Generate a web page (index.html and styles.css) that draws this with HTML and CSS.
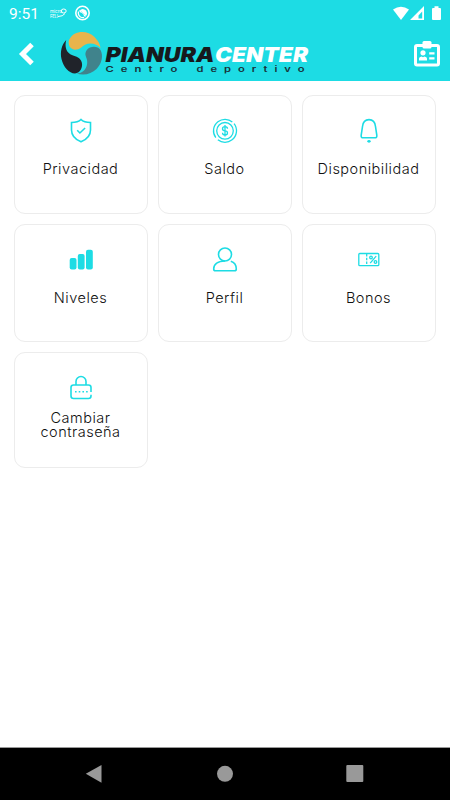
FILE: index.html
```html
<!DOCTYPE html>
<html lang="es">
<head>
  <meta charset="UTF-8">
  <meta name="viewport" content="width=device-width, initial-scale=1.0">
  <title>Pianura Center</title>
  <link rel="stylesheet" href="styles.css">
</head>
<body>
  <header class="header">
    <div class="status-bar">
      <span class="time">9:51</span>
      <svg class="status-left" width="42" height="18" viewBox="0 0 42 18">
        <text x="0" y="7.500" font-size="4.6" textLength="12">micro</text>
        <text x="0" y="12.500" font-size="4.6" textLength="8">FELI</text>
        <ellipse cx="13.7" cy="6" rx="2.5" ry="2" fill="none" stroke="#fff"/>
        <path d="M8 11.500q5 0 7-3" fill="none" stroke="#fff"/>
        <circle cx="32.500" cy="8" r="6.700" fill="none" stroke="#fff" stroke-width="1.6"/>
        <path d="M29.500 5.500q3-3 6.500 0 2 3 0 5.500l-5-5z" fill="#fff"/>
        <path d="M28.500 6.500q-.8 3.500 2 5.500 2 1 3.500.3M29.500 5.500l6 6" fill="none" stroke="#fff" stroke-width="1.3"/>
        <path d="M31 8l2.500 2.500" stroke="#1ddce4" stroke-width="1.3"/>
      </svg>
      <svg class="status-right" width="50" height="18" viewBox="0 0 50 18" fill="#fff">
        <path d="M1 4.500q8-5.500 16 0L9 15z"/>
        <path fill-rule="evenodd" d="M18 15L32 1v14zM26.500 13.500h3.700V6.500l-3.700 4z"/>
        <path d="M42.500 1.300h4V3H48q1 0 1 1v10q0 1-1 1h-7q-1 0-1-1V4q0-1 1-1h1.500z"/>
      </svg>
    </div>
    <div class="app-bar">
      <svg class="back" width="18" height="24" viewBox="0 0 18 24">
        <path d="M15 2.500L5.500 12l9.500 9.500" fill="none" stroke="#fff" stroke-width="5"/>
      </svg>
      <svg class="logo" width="252" height="48" viewBox="0 0 252 48">
        <path d="M9 10C12 4 17 2 22 2C27 2 31 3.500 34.500 7C38 10.500 40 14 40.500 18C37 13.500 30 12.300 25 14.700C21.500 16.500 20.500 19 17 19.500C11 20.500 7.500 15.500 9 10Z" fill="#e9b44c"/>
        <path d="M6.200 10C1.500 15 0 22 1.500 29C3.500 37.500 9 43.300 15 43.500C20.500 43 23 37 21.800 32.500C20.500 27.500 16 26.500 12.500 25.300C6 23 4.500 16.500 6.200 10Z" fill="#20232a"/>
        <path d="M16.500 43.500C24 46 31.500 44 36.500 39C42 33.500 43.500 25.500 40.500 20C37.500 15.500 30 16 26.800 20C24.500 23.500 25.500 25.500 26.800 29C28 33.500 26.500 38 24 40.500C22 42.500 19.500 43.300 16.500 43.500Z" fill="#40838c"/>
        <text class="logo-name" x="45.500" y="32" textLength="109" lengthAdjust="spacingAndGlyphs" fill="#17191d">PIANURA</text>
        <text class="logo-name" x="155" y="32" textLength="93" lengthAdjust="spacingAndGlyphs" fill="#fff">CENTER</text>
        <text class="logo-sub" x="45.500" y="41.500" textLength="79" lengthAdjust="spacingAndGlyphs">Centro</text>
        <text class="logo-sub" x="136.500" y="41.500" textLength="115" lengthAdjust="spacingAndGlyphs">deportivo</text>
      </svg>
      <svg class="card-id" width="27" height="26" viewBox="0 0 27 26">
        <rect x="2.500" y="4.500" width="23" height="19.500" rx="1.500" fill="none" stroke="#fff" stroke-width="3"/>
        <rect x="9.500" y="0" width="9" height="7.500" rx="1.500" fill="#fff"/>
        <circle cx="10" cy="11.800" r="2.600" fill="#fff"/>
        <path d="M6 19.500v-2q0-1.500 2.500-2l1.500.8 1.500-.8q2.500.5 2.500 2v2z" fill="#fff"/>
        <path d="M16.200 12.300H21.500M16.200 17.300H21.500" stroke="#fff" stroke-width="2.200"/>
      </svg>
    </div>
  </header>

  <main class="grid">
    <div class="card">
      <svg class="icon" viewBox="0 0 26 26">
        <path d="M13 1.500Q16 4.500 22.500 4.500V12Q22.500 20 13 23.800Q3.500 20 3.500 12V4.500Q10 4.500 13 1.500Z"/>
        <path d="M9.200 12.300l2.700 2.700 5.200-5"/>
      </svg>
      <span class="label">Privacidad</span>
    </div>
    <div class="card">
      <svg class="icon thin" viewBox="0 0 26 26">
        <circle cx="13" cy="12.800" r="8.300"/>
        <circle cx="13" cy="12.800" r="11.500" stroke-dasharray="33.130 3" transform="rotate(-38 13 12.800)"/>
        <path d="M15.500 10.800q0-2.200-2.500-2.200t-2.500 2.100 2.500 2.100 2.500 2.100-2.500 2.100-2.500-2.200M13 7v11.600"/>
      </svg>
      <span class="label">Saldo</span>
    </div>
    <div class="card">
      <svg class="icon" viewBox="0 0 26 26">
        <path d="M6.500 8.500Q7.200 1.600 13 1.600T19.500 8.500L20.800 17.200Q21.200 19.800 18.800 19.800H7.200Q4.800 19.800 5.200 17.200Z"/>
        <ellipse class="solid" cx="13" cy="23.300" rx="1.700" ry="1.400"/>
      </svg>
      <span class="label">Disponibilidad</span>
    </div>
    <div class="card">
      <svg class="icon solid" viewBox="0 0 26 26">
        <rect x="1.700" y="11" width="6.800" height="11.500" rx="2"/>
        <rect x="9.800" y="7" width="6.800" height="15.500" rx="2"/>
        <rect x="18" y="2.800" width="6.800" height="19.700" rx="2"/>
      </svg>
      <span class="label">Niveles</span>
    </div>
    <div class="card">
      <svg class="icon" viewBox="0 0 26 26">
        <circle cx="13" cy="7.500" r="6.500"/>
        <path d="M13 14Q1.700 14.500 1.700 22Q1.700 23.800 3.500 23.800H22.500Q24.300 23.800 24.300 22Q24.300 16 18.800 14.300"/>
      </svg>
      <span class="label">Perfil</span>
    </div>
    <div class="card">
      <svg class="icon thin" viewBox="0 0 26 26">
        <rect x="2.800" y="6.500" width="20" height="12.200" rx="1"/>
        <path d="M10.700 7v12" stroke-dasharray="2.500 1.200"/>
        <circle cx="15" cy="10.500" r="1.300"/>
        <circle cx="19.500" cy="15" r="1.300"/>
        <path d="M20.200 9.200l-6 7"/>
      </svg>
      <span class="label">Bonos</span>
    </div>
    <div class="card card-tall">
      <svg class="icon" viewBox="0 0 26 26">
        <path d="M8 10V6.500a5 5 0 0 1 10 0V10"/>
        <path d="M23 17V12.500Q23 10 20.500 10H5.500Q3 10 3 12.500V21Q3 23.500 5.500 23.500H20.500Q23 23.500 23 21V19.800"/>
        <path d="M7 16.800h13" stroke-dasharray="1.600 2.100"/>
      </svg>
      <span class="label">Cambiar contraseña</span>
    </div>
  </main>

  <footer class="nav-bar">
    <svg width="18" height="18" viewBox="0 0 18 18"><path d="M.8 8.800L16.500 0v17.800z"/></svg>
    <svg width="18" height="18" viewBox="0 0 18 18"><circle cx="9" cy="8.800" r="8"/></svg>
    <svg width="18" height="18" viewBox="0 0 18 18"><rect x=".3" y="0" width="17" height="17" rx="1"/></svg>
  </footer>
</body>
</html>
```

FILE: styles.css
```css
* {
  box-sizing: border-box;
}

body {
  margin: 0;
  height: 100vh;
  display: flex;
  flex-direction: column;
  background-color: #fff;
  font-family: Inter, sans-serif;
  overflow: hidden;
}

.header {
  height: 81px;
  background-color: #1ddce4;
}

.status-bar {
  height: 27px;
  padding: 0 8px 0 9px;
  display: flex;
  align-items: center;
  color: #fff;
}

.time {
  width: 41px;
  font-family: Roboto, sans-serif;
  font-size: 15.5px;
}

.status-left {
  fill: #fff;
}

.status-right {
  margin-left: auto;
}

.app-bar {
  height: 54px;
  padding: 0 10px 0 17px;
  display: flex;
  align-items: center;
}

.logo {
  margin-left: 25px;
  overflow: visible;
}

.logo-name {
  font-size: 20.5px;
  font-weight: 900;
  font-style: italic;
}

.logo-sub {
  font-size: 8px;
  font-weight: 600;
  letter-spacing: 5px;
  fill: #17333a;
}

.card-id {
  margin-left: auto;
}

.grid {
  flex: 1;
  padding: 14px 14px 0 13.5px;
  display: grid;
  grid-template-columns: repeat(3, 134px);
  grid-template-rows: 118.5px 118.5px 116px;
  gap: 10px;
}

.card {
  border: 1px solid #ececec;
  border-radius: 11px;
  padding: 22px 15px 0;
  display: flex;
  flex-direction: column;
  align-items: center;
}

.icon {
  width: 26px;
  height: 26px;
  flex: none;
  fill: none;
  stroke: #1ddce4;
  stroke-width: 1.6;
}

.thin {
  stroke-width: 1.3;
}

.solid {
  fill: #1ddce4;
  stroke: none;
}

.label {
  margin-top: 17px;
  font-size: 14.5px;
  font-weight: 300;
  line-height: 15px;
  letter-spacing: 0.5px;
  text-align: center;
  white-space: nowrap;
  color: #111;
}

.card-tall .label {
  width: 90px;
  margin-top: 10px;
  line-height: 14px;
  white-space: normal;
}

.nav-bar {
  height: 53px;
  padding: 0 86px 0 85px;
  display: flex;
  justify-content: space-between;
  align-items: center;
  background-color: #000;
  border-top: 1px solid #999;
  fill: #999;
}
```
